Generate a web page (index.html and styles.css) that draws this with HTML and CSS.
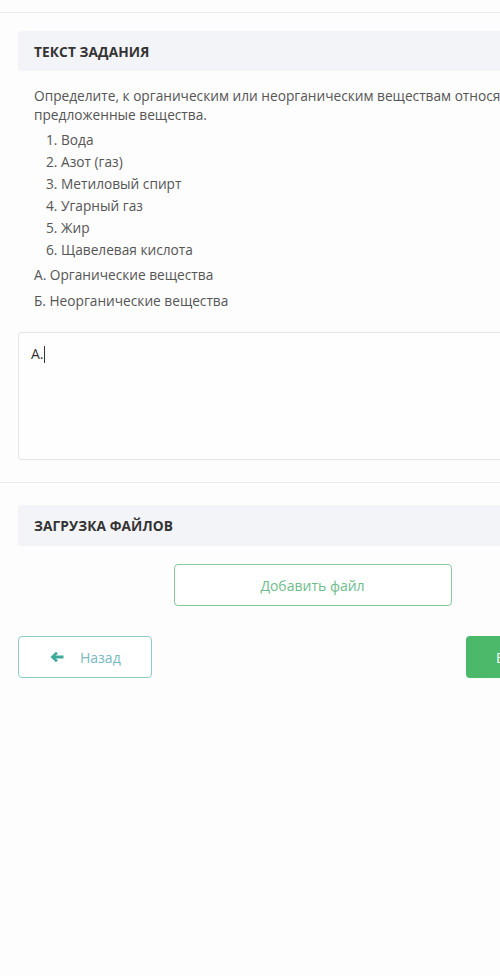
FILE: index.html
```html
<!DOCTYPE html>
<html lang="ru">
<head>
<meta charset="utf-8">
<title>Задание</title>
<link rel="stylesheet" href="styles.css">
</head>
<body>
<div class="page">
  <div class="rule rule-top"></div>
  <section class="block">
    <div class="block-head">ТЕКСТ ЗАДАНИЯ</div>
    <div class="task">
      <p class="lead">Определите, к органическим или неорганическим веществам относятся предложенные вещества.</p>
      <ol class="items">
        <li>Вода</li>
        <li>Азот (газ)</li>
        <li>Метиловый спирт</li>
        <li>Угарный газ</li>
        <li>Жир</li>
        <li>Щавелевая кислота</li>
      </ol>
      <p class="opt">А. Органические вещества</p>
      <p class="opt">Б. Неорганические вещества</p>
    </div>
    <div class="answer"><span class="answer-text">А.</span><span class="caret"></span></div>
  </section>
  <div class="rule rule-mid"></div>
  <section class="block">
    <div class="block-head">ЗАГРУЗКА ФАЙЛОВ</div>
    <div class="upload-row">
      <button class="btn btn-add">Добавить файл</button>
    </div>
    <div class="nav-row">
      <button class="btn btn-back">
        <svg class="arrow" viewBox="0 0 14 12" width="14" height="12"><path d="M0.5 6 L6 0.8 L8 2.7 L5.4 4.6 H13.5 V7.4 H5.4 L8 9.3 L6 11.2 Z" fill="#3fa89d"/></svg>
        <span>Назад</span>
      </button>
      <button class="btn btn-next">Вперёд</button>
    </div>
  </section>
</div>
</body>
</html>
```

FILE: styles.css
```css
html, body {
  margin: 0;
  padding: 0;
  background: #fdfdfd;
  overflow: hidden;
}
body {
  font-family: "Open Sans", "Noto Sans", sans-serif;
  color: #555;
}
.page {
  width: 625px;
  padding-top: 12px;
}
.rule {
  height: 1px;
  background: #e9eaec;
}
.block {
  margin-left: 18px;
  width: 589px;
}
.rule-top + .block {
  margin-top: 18px;
}
.block-head {
  height: 40px;
  box-sizing: border-box;
  padding-left: 16px;
  display: flex;
  align-items: center;
  background: #f3f4f7;
  border-radius: 3px;
  font-size: 13.7px;
  font-weight: 700;
  color: #333;
  letter-spacing: 0.1px;
}
.task {
  padding: 15px 16px 0 16px;
  font-size: 13.7px;
}
.lead {
  margin: 0;
  line-height: 19px;
}
.items {
  margin: 5px 0 0 0;
  padding-left: 27px;
  line-height: 22px;
}
.opt {
  margin: 3px 0 0 0;
  line-height: 22px;
}
.opt + .opt {
  margin-top: 4px;
}
.answer {
  margin-top: 20px;
  height: 128px;
  box-sizing: border-box;
  border: 1px solid #e4e5e7;
  border-radius: 3px;
  background: #fefefe;
  padding: 11px 12px;
  font-size: 14px;
  color: #333;
  display: flex;
  align-items: flex-start;
  line-height: 19px;
}
.caret {
  display: inline-block;
  width: 1px;
  height: 17px;
  background: #333;
  margin-top: 2px;
}
.rule-mid {
  margin-top: 22px;
}
.rule-mid + .block {
  margin-top: 22px;
}
.rule-mid + .block .block-head {
  height: 41px;
}
.upload-row {
  display: flex;
  justify-content: center;
  margin-top: 18px;
}
.btn {
  font-family: "Open Sans", "Noto Sans", sans-serif;
  font-size: 14px;
  height: 42px;
  box-sizing: border-box;
  border-radius: 4px;
  background: #fff;
  cursor: pointer;
}
.btn-add {
  width: 278px;
  border: 1.5px solid #86c99e;
  color: #6dbd8b;
}
.nav-row {
  margin-top: 30px;
  display: flex;
  justify-content: space-between;
}
.btn-back {
  width: 134px;
  border: 1.5px solid #8ecbc5;
  color: #7ab9bf;
  display: flex;
  align-items: center;
  padding-left: 31px;
  gap: 16px;
}
.btn-back span {
  font-size: 14px;
}
.arrow {
  display: block;
}
.btn-next {
  width: 141px;
  border: none;
  background: #4cb86a;
  color: #fff;
  text-align: left;
  padding-left: 30px;
}
```
